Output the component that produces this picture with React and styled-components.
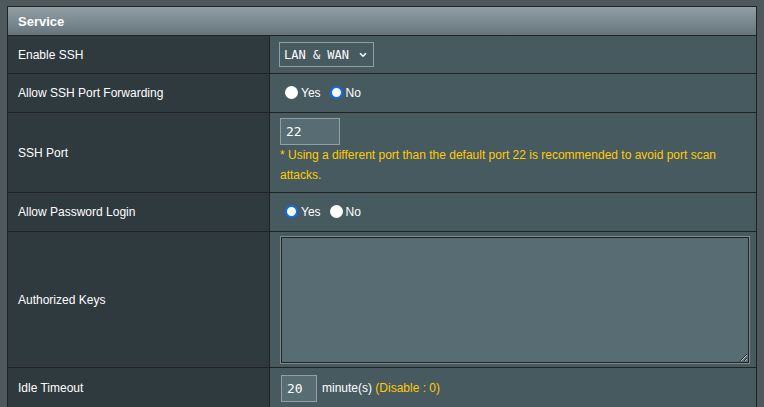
import styled, { createGlobalStyle } from 'styled-components'

const GlobalStyle = createGlobalStyle`
  html, body {
    margin: 0;
    padding: 0;
    background: #4d595d;
    font-family: 'Liberation Sans', Arial, sans-serif;
  }
`

const Page = styled.div`
  padding: 6px 7px 0 7px;
  border-left: 5px solid #3c464a;
  min-height: 401px;
  box-sizing: border-box;
  margin-left: -5px;
`

const FormTable = styled.div`
  border: 1px solid #222;
  border-bottom: none;
  background: #475a5f;
`

const Head = styled.div`
  height: 28px;
  display: flex;
  align-items: center;
  padding-left: 10px;
  background: linear-gradient(#92a0a5 0%, #66757c 100%);
  border-bottom: 1px solid #222;
  color: #fff;
  font-weight: bold;
  font-size: 13px;
`

const Row = styled.div`
  display: grid;
  grid-template-columns: 262px 1fr;
  min-height: ${(p) => p.$h}px;
  border-bottom: 1px solid #222;
  &:last-child {
    border-bottom: none;
  }
`

const Label = styled.div`
  display: flex;
  align-items: center;
  padding-left: 10px;
  background: #2f3a3e;
  border-right: 1px solid #222;
  color: #fff;
  font-size: 12px;
`

const Cell = styled.div`
  display: flex;
  flex-direction: ${(p) => (p.$column ? 'column' : 'row')};
  align-items: ${(p) => (p.$column ? 'flex-start' : 'center')};
  justify-content: ${(p) => (p.$column ? 'center' : 'flex-start')};
  padding: ${(p) => p.$pad || '0 10px 0 9px'};
  color: #fff;
  font-size: 12px;
`

const SelectWrap = styled.span`
  position: relative;
  display: inline-flex;
`

const Select = styled.select`
  appearance: none;
  width: 95px;
  height: 25px;
  padding: 0 0 0 4px;
  background: #475a5f;
  border: 1px solid #929ea1;
  color: #fff;
  font-family: 'DejaVu Sans Mono', 'Liberation Mono', monospace;
  font-size: 12px;
  outline: none;
`

const Chevron = styled.svg`
  position: absolute;
  right: 7px;
  top: 10px;
  pointer-events: none;
`

const RadioLabel = styled.label`
  display: inline-flex;
  align-items: center;
  margin-right: ${(p) => (p.$last ? 0 : '4px')};
  color: #fff;
  font-size: 12px;
`

const Radio = styled.input`
  appearance: none;
  width: 13px;
  height: 13px;
  margin: 0 3px 2px 5px;
  border-radius: 50%;
  background: #fff;
  box-sizing: border-box;
  &:checked {
    border: 2.5px solid #0b6cf5;
  }
`

const TextInput = styled.input`
  box-sizing: border-box;
  width: ${(p) => p.$w}px;
  height: 27px;
  padding: 0 5px;
  margin: 0;
  background: #576d73;
  border: 1px solid #929ea1;
  color: #fff;
  font-family: 'DejaVu Sans Mono', 'Liberation Mono', monospace;
  font-size: 13px;
  outline: none;
`

const Note = styled.div`
  color: #fc0;
  font-size: 12px;
  line-height: 20px;
  margin-top: 0;
`

const Hint = styled.span`
  color: #fc0;
`

const Keys = styled.textarea`
  box-sizing: border-box;
  width: 468px;
  height: 126px;
  margin: 0 0 0 1px;
  background: #576d73;
  border: 1px solid #222;
  box-shadow: 0 0 0 1px #7d8b8f;
  color: #fff;
  resize: both;
  outline: none;
`

const Minutes = styled.span`
  margin-left: 5px;
`

function RadioGroup({ name, value }) {
  return (
    <>
      <RadioLabel>
        <Radio type='radio' name={name} defaultChecked={value === 1} />
        Yes
      </RadioLabel>
      <RadioLabel $last>
        <Radio type='radio' name={name} defaultChecked={value === 0} />
        No
      </RadioLabel>
    </>
  )
}

export default function App() {
  return (
    <>
      <GlobalStyle />
      <Page>
        <FormTable>
          <Head>Service</Head>
          <Row $h={37}>
            <Label>Enable SSH</Label>
            <Cell>
              <SelectWrap>
                <Select defaultValue='2'>
                  <option value='2'>LAN &amp; WAN</option>
                  <option value='1'>LAN only</option>
                  <option value='0'>No</option>
                </Select>
                <Chevron width='8' height='6' viewBox='0 0 8 6'>
                  <path d='M1 1.2 L4 4.2 L7 1.2' fill='none' stroke='#fff' strokeWidth='1.6' />
                </Chevron>
              </SelectWrap>
            </Cell>
          </Row>
          <Row $h={38}>
            <Label>Allow SSH Port Forwarding</Label>
            <Cell $pad='0 10px 0 10px'>
              <RadioGroup name='fwd' value={0} />
            </Cell>
          </Row>
          <Row $h={79}>
            <Label>SSH Port</Label>
            <Cell $column $pad='4px 10px 6px 10px'>
              <TextInput $w={60} defaultValue='22' />
              <Note>* Using a different port than the default port 22 is recommended to avoid port scan attacks.</Note>
            </Cell>
          </Row>
          <Row $h={38}>
            <Label>Allow Password Login</Label>
            <Cell $pad='0 10px 0 10px'>
              <RadioGroup name='pwd' value={1} />
            </Cell>
          </Row>
          <Row $h={135}>
            <Label>Authorized Keys</Label>
            <Cell $pad='0 10px 0 10px'>
              <Keys />
            </Cell>
          </Row>
          <Row $h={40}>
            <Label>Idle Timeout</Label>
            <Cell $pad='0 10px 0 11px'>
              <TextInput $w={36} defaultValue='20' />
              <Minutes>
                minute(s) <Hint>(Disable : 0)</Hint>
              </Minutes>
            </Cell>
          </Row>
        </FormTable>
      </Page>
    </>
  )
}
